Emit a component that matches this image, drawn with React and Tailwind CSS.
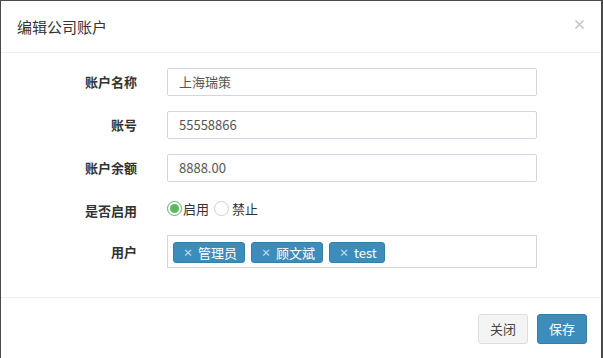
export default function App() {
  const font = { fontFamily: '"Noto Sans CJK SC", "Noto Sans", sans-serif' }
  const users = ['管理员', '顾文斌', 'test']

  return (
    <div
      className="w-[603px] h-[358px] bg-white border-t border-l border-r-2 border-[#4a4a4a] flex flex-col text-[#333]"
      style={font}
    >
      {/* Header */}
      <div className="h-[52px] flex-shrink-0 flex items-center justify-between pl-[16px] pr-[17px] border-b border-[#f0f0f0]">
        <h4 className="text-[15px] leading-none">编辑公司账户</h4>
        <svg width="9" height="9" viewBox="0 0 9 9" className="mt-[-4px]">
          <path d="M0.5 0.5 L8.5 8.5 M8.5 0.5 L0.5 8.5" stroke="#c9c9c9" strokeWidth="1.6" />
        </svg>
      </div>

      {/* Body */}
      <div className="flex-1 pt-[15px] flex flex-col">
        <div className="flex items-center mb-[15px]">
          <label className="w-[136px] text-right text-[13px] font-bold">账户名称</label>
          <div className="ml-[30px] w-[370px] h-[28px] border border-[#d2d6de] rounded-[2px] px-[11px] flex items-center text-[13px] text-[#555]">上海瑞策</div>
        </div>
        <div className="flex items-center mb-[15px]">
          <label className="w-[136px] text-right text-[13px] font-bold">账号</label>
          <div className="ml-[30px] w-[370px] h-[28px] border border-[#d2d6de] rounded-[2px] px-[11px] flex items-center text-[13px] text-[#555]">55558866</div>
        </div>
        <div className="flex items-center mb-[15px]">
          <label className="w-[136px] text-right text-[13px] font-bold">账户余额</label>
          <div className="ml-[30px] w-[370px] h-[28px] border border-[#d2d6de] rounded-[2px] px-[11px] flex items-center text-[13px] text-[#555]">8888.00</div>
        </div>
        <div className="flex items-center h-[23px] mb-[15px]">
          <label className="w-[136px] text-right text-[13px] font-bold mt-[4px]">是否启用</label>
          <div className="ml-[30px] flex items-center text-[13px]">
            <span className="w-[15px] h-[15px] rounded-full border border-[#5cb85c] flex items-center justify-center">
              <span className="w-[9px] h-[9px] rounded-full bg-[#5cb85c]" />
            </span>
            <span className="ml-[1px]">启用</span>
            <span className="ml-[5px] w-[15px] h-[15px] rounded-full border border-[#d0d0d0]" />
            <span className="ml-[3px]">禁止</span>
          </div>
        </div>
        <div className="flex items-center">
          <label className="w-[136px] text-right text-[13px] font-bold">用户</label>
          <div className="ml-[30px] w-[370px] h-[33px] border border-[#d2d6de] px-[5px] flex items-center gap-[6px]">
            {users.map(u => (
              <span
                key={u}
                className="h-[21px] mt-[2px] flex items-center bg-[#3c8dbc] border border-[#367fa9] rounded-[3px] text-white text-[13px] pl-[9px] pr-[7px]"
              >
                <span className="text-[#c5dcec] text-[10px] font-bold mr-[5px] leading-none">×</span>
                {u}
              </span>
            ))}
          </div>
        </div>
      </div>

      {/* Footer */}
      <div className="h-[61px] flex-shrink-0 border-t border-[#f0f0f0] flex justify-end items-start pt-[16px] pr-[14px] gap-[9px]">
        <button className="w-[50px] h-[30px] bg-[#f4f4f4] border border-[#ddd] rounded-[3px] text-[13px] text-[#444]">关闭</button>
        <button className="w-[50px] h-[30px] bg-[#3c8dbc] border border-[#367fa9] rounded-[3px] text-[13px] text-white">保存</button>
      </div>
    </div>
  )
}
